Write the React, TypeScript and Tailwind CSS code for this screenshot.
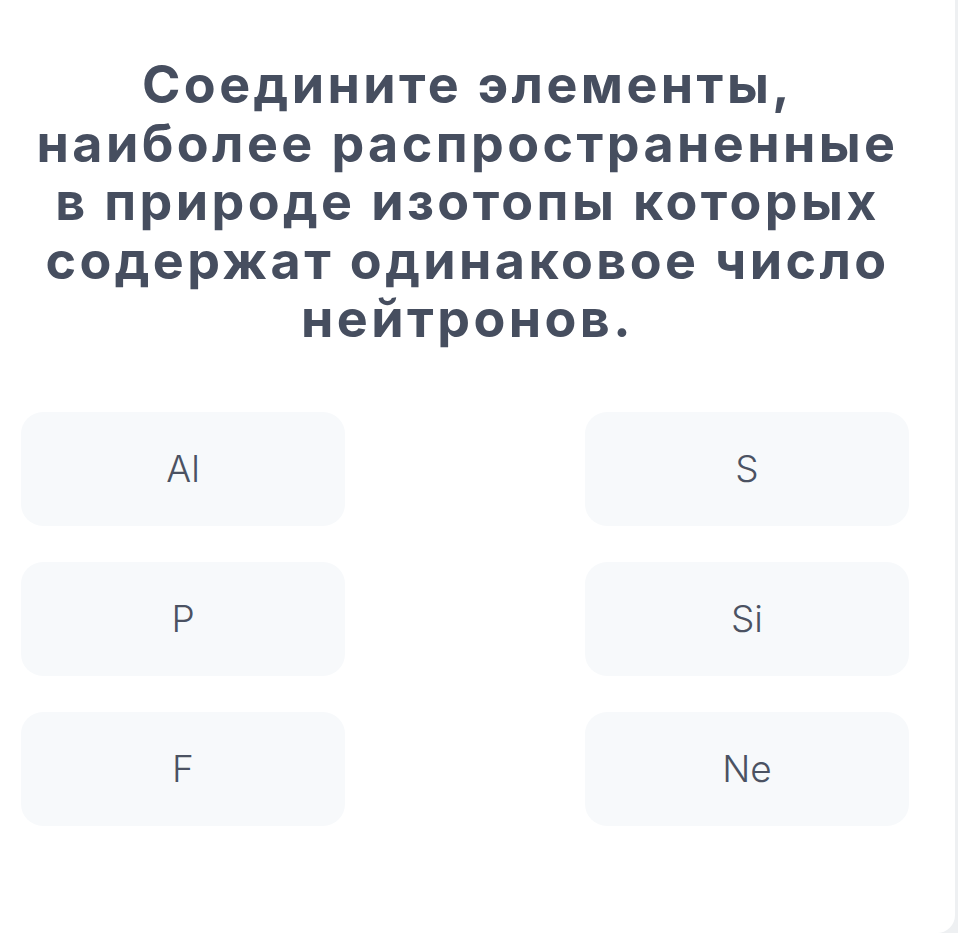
const pairs: [string, string][] = [
  ["Al", "S"],
  ["P", "Si"],
  ["F", "Ne"],
];

function Tile({ label }: { label: string }) {
  return (
    <div className="flex h-[114px] w-[324px] items-center justify-center rounded-[22px] bg-[#f7f9fb] text-[37px] font-light text-[#4b5262]">
      {label}
    </div>
  );
}

export default function App() {
  return (
    <div className="min-h-[933px] w-[958px] bg-[#eef0f2]" style={{ fontFamily: "Inter, 'Noto Sans', sans-serif" }}>
      <div className="flex min-h-[933px] w-[955px] flex-col rounded-br-[18px] bg-white">
        <h1 className="pr-[20px] pt-[56px] text-center text-[52px] font-bold leading-[58.5px] tracking-[3.4px] text-[#464e5f]">
          Соедините элементы,
          <br />
          наиболее распространенные
          <br />
          в природе изотопы которых
          <br />
          содержат одинаковое число
          <br />
          нейтронов.
        </h1>
        <div className="mt-[63px] flex flex-col gap-[36px] pl-[21px]">
          {pairs.map(([a, b]) => (
            <div key={a} className="flex gap-[240px]">
              <Tile label={a} />
              <Tile label={b} />
            </div>
          ))}
        </div>
      </div>
    </div>
  );
}
